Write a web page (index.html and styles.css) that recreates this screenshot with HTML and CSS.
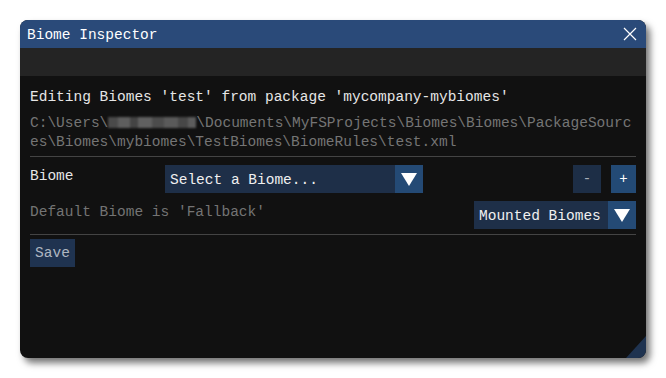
FILE: index.html
```html
<!DOCTYPE html>
<html lang="en">

<head>
    <meta charset="UTF-8">
    <title>Biome Inspector</title>
    <link rel="stylesheet" href="styles.css">
</head>

<body>
    <div class="window">
        <div class="title-bar">
            <span class="title">Biome Inspector</span>
            <button class="close-button">
                <svg viewBox="0 0 14 14" fill="none" stroke="currentColor" stroke-width="1.2">
                    <path d="M1,1 L13,13 M13,1 L1,13" />
                </svg>
            </button>
        </div>
        <div class="menu-bar"></div>

        <div class="content">
            <div class="heading">Editing Biomes 'test' from package 'mycompany-mybiomes'</div>
            <div class="path">C:\Users\<span class="redacted"></span>\Documents\MyFSProjects\Biomes\Biomes\PackageSources\Biomes\mybiomes\TestBiomes\BiomeRules\test.xml</div>

            <div class="separator"></div>

            <div class="row biome-row">
                <span class="label">Biome</span>
                <div class="combo biome-combo">
                    <span class="combo-text">Select a Biome...</span>
                    <span class="combo-arrow"><span class="triangle"></span></span>
                </div>
                <div class="spacer"></div>
                <button class="small-button minus">-</button>
                <button class="small-button plus">+</button>
            </div>

            <div class="row default-row">
                <span class="muted">Default Biome is 'Fallback'</span>
                <div class="spacer"></div>
                <div class="combo mounted-combo">
                    <span class="combo-text">Mounted Biomes</span>
                    <span class="combo-arrow"><span class="triangle"></span></span>
                </div>
            </div>

            <div class="separator bottom"></div>

            <button class="save-button">Save</button>
        </div>

        <div class="resize-grip"></div>
    </div>
</body>

</html>
```

FILE: styles.css
```css
* {
    margin: 0;
    padding: 0;
    box-sizing: border-box;
    font-family: 'Liberation Mono', 'DejaVu Sans Mono', monospace;
}

body {
    background-color: #ffffff;
    width: 666px;
    height: 378px;
    overflow: hidden;
    padding: 20px 0 0 20px;
}

.window {
    position: relative;
    width: 626px;
    height: 338px;
    background-color: #111111;
    border-radius: 8px;
    overflow: hidden;
    box-shadow: 4px 5px 7px rgba(0, 0, 0, 0.55);
    font-size: 14.5px;
}

.title-bar {
    height: 28px;
    background-color: #2a4a79;
    display: flex;
    align-items: center;
    padding: 0 8px 0 7px;
    color: #ffffff;
}

.title {
    flex: 1;
    padding-top: 2px;
}

.close-button {
    background: none;
    border: none;
    color: #ffffff;
    width: 14px;
    height: 14px;
    display: flex;
    margin-right: 1px;
}

.close-button svg {
    width: 14px;
    height: 14px;
}

.menu-bar {
    height: 28px;
    background-color: #242424;
}

.content {
    padding: 12px 10px 0 10px;
    color: #e6e6e6;
}

.heading {
    line-height: 19px;
    margin-bottom: 7px;
}

.path {
    line-height: 19px;
    color: #757575;
    word-break: break-all;
}

.redacted {
    display: inline-block;
    width: 88px;
    height: 11px;
    vertical-align: -1px;
    background: linear-gradient(90deg, #4a4a4a 0 10px, #5e5e5e 10px 22px, #444 22px 30px, #606060 30px 44px, #4c4c4c 44px 56px, #5a5a5a 56px 70px, #474747 70px 80px, #5c5c5c 80px);
    filter: blur(0.8px);
}

.separator {
    height: 1px;
    background-color: #444444;
    margin: 4px 0 8px 0;
}

.separator.bottom {
    margin: 5px 0 4px 0;
}

.row {
    display: flex;
    height: 28px;
}

.spacer {
    flex: 1;
}

.label {
    width: 135px;
    line-height: 22px;
}

.combo {
    display: flex;
    height: 28px;
    background-color: #1e2f48;
    color: #f0f0f0;
}

.biome-combo {
    width: 258px;
}

.mounted-combo {
    width: 162px;
}

.combo-text {
    flex: 1;
    padding-left: 5px;
    line-height: 30px;
}

.combo-arrow {
    width: 28px;
    background-color: #244a75;
    display: flex;
    align-items: center;
    justify-content: center;
}

.triangle {
    width: 0;
    height: 0;
    border-left: 8px solid transparent;
    border-right: 8px solid transparent;
    border-top: 13px solid #ffffff;
}

.small-button {
    height: 28px;
    border: none;
    color: #ffffff;
    font-size: 14px;
}

.small-button.minus {
    width: 28px;
    background-color: #1d2e46;
    color: #a9b0ba;
    margin-right: 10px;
}

.small-button.plus {
    width: 25px;
    background-color: #234a75;
}

.default-row {
    margin-top: 8px;
}

.muted {
    color: #747474;
    line-height: 22px;
}

.save-button {
    width: 45px;
    height: 28px;
    border: none;
    background-color: #1f3350;
    color: #aeb6c0;
    font-size: 14.5px;
}

.resize-grip {
    position: absolute;
    right: 0;
    bottom: 0;
    width: 20px;
    height: 22px;
    background-color: #1f3350;
    clip-path: polygon(100% 0, 100% 100%, 0 100%);
}
```
